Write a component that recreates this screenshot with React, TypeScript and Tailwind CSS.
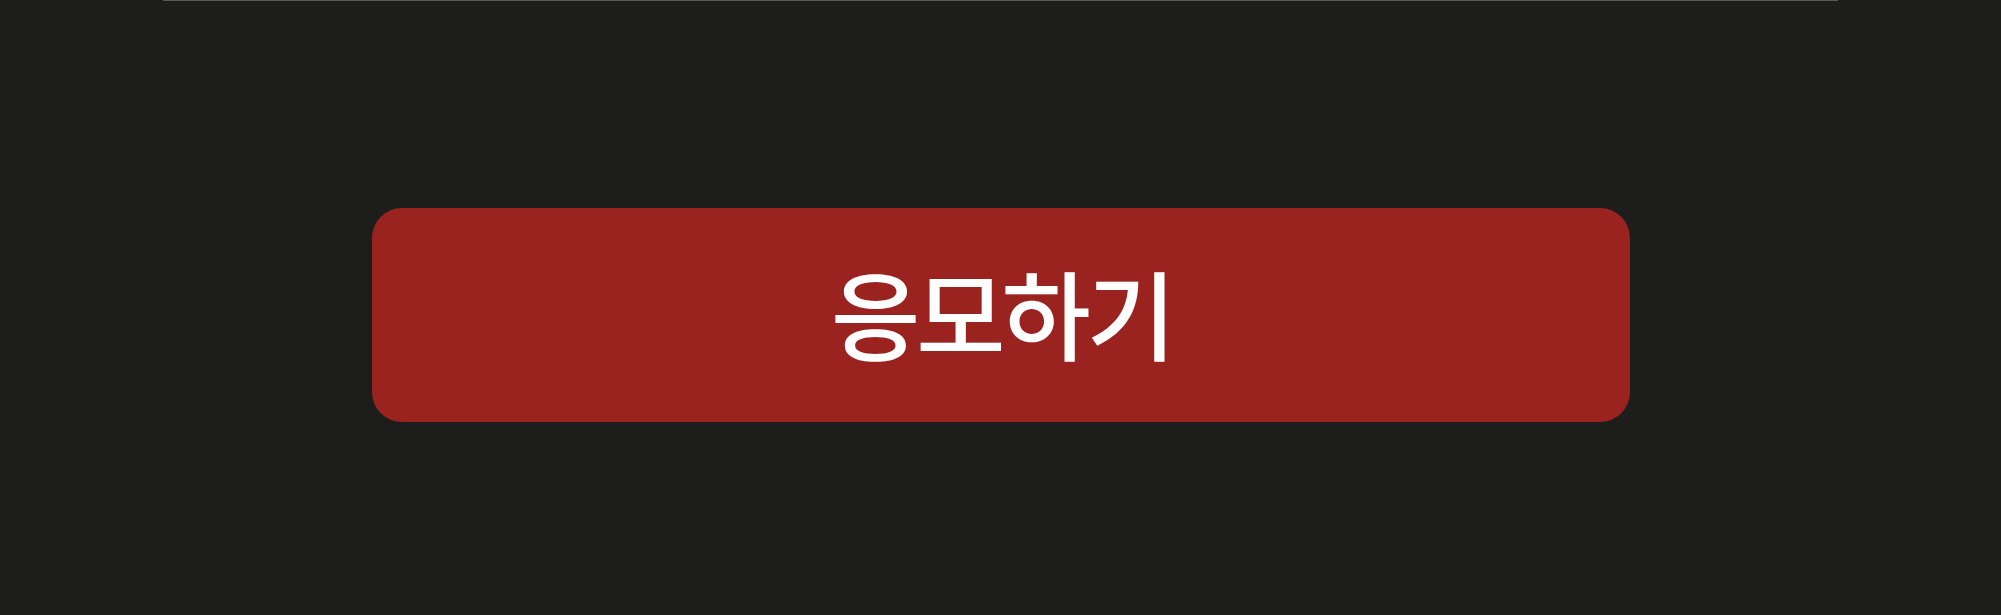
export default function App() {
  return (
    <div className="min-h-[615px] w-full bg-[#1d1d1b] flex flex-col items-center">
      {/* thin divider at the top of the section */}
      <div className="h-px w-[1675px] bg-[#5a5a58]" />
      <div className="pt-[207px] w-full flex justify-center">
        <button
          type="button"
          className="w-[1258px] h-[214px] rounded-[30px] bg-[#9a221f] text-white flex items-center justify-center"
          style={{ fontFamily: '"Noto Sans CJK KR", "Noto Sans", sans-serif' }}
        >
          <span className="text-[97px] leading-none tracking-[-4px] font-medium pl-[2px] mb-[10px]">응모하기</span>
        </button>
      </div>
    </div>
  );
}
